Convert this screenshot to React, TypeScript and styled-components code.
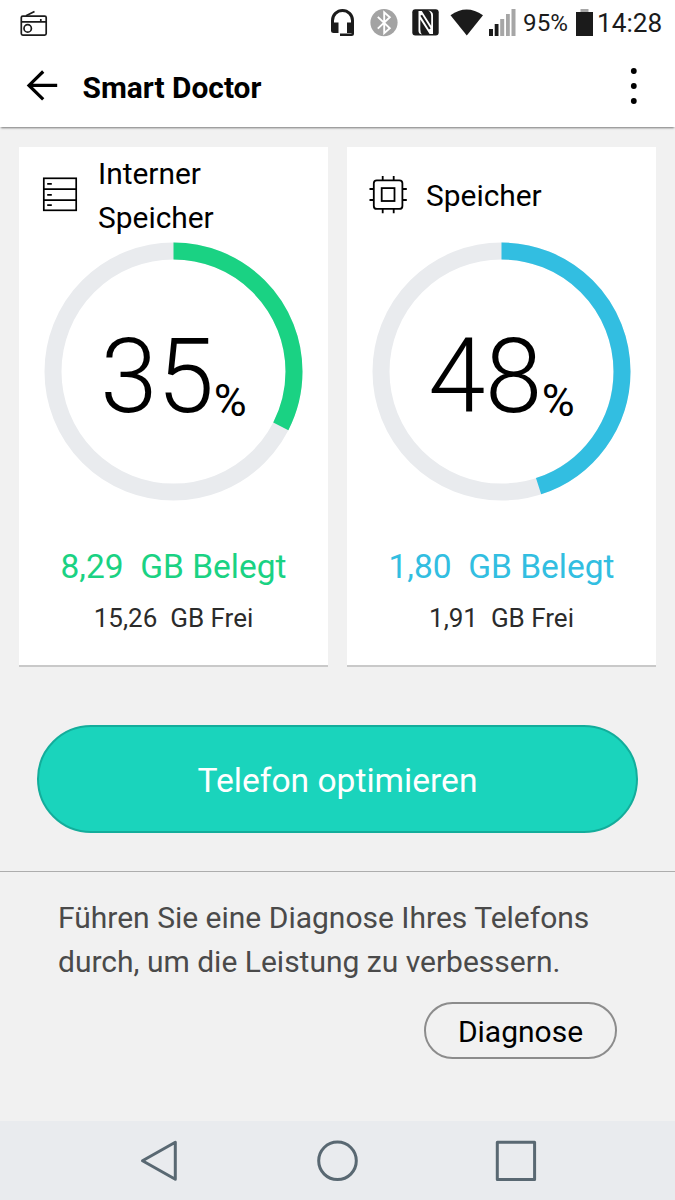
import React from "react";
import styled, { createGlobalStyle } from "styled-components";

const GlobalStyle = createGlobalStyle`
  * { box-sizing: border-box; }
  body { margin: 0; background: #f1f1f1; }
  button { font: inherit; cursor: pointer; }
  svg { display: block; flex: none; }
`;

const Screen = styled.div`
  width: 675px;
  height: 1200px;
  display: flex;
  flex-direction: column;
  overflow: hidden;
  background: #f1f1f1;
  color: #000;
  font-family: Roboto, "Liberation Sans", sans-serif;
`;

const StatusBar = styled.header`
  height: 45px;
  padding: 0 16px 0 20px;
  display: flex;
  align-items: center;
  background: #fff;
  color: #1b1b1b;
`;

const StatusGroup = styled.div`
  margin-left: auto;
  display: flex;
  align-items: center;
`;

const StatusText = styled.span<{ $size: number; $width: number; $align: "left" | "right" }>`
  width: ${(p) => p.$width}px;
  font-size: ${(p) => p.$size}px;
  line-height: 32px;
  white-space: nowrap;
  text-align: ${(p) => p.$align};
`;

const AppBar = styled.div`
  height: 82px;
  padding: 0 37px 0 25px;
  display: flex;
  align-items: center;
  background: #fff;
  box-shadow: 0 2px 2px -1px rgba(0, 0, 0, 0.5);
`;

const Title = styled.h1`
  margin: 3px 0 0 23.5px;
  flex: 1;
  font-size: 29.9px;
  font-weight: 700;
  line-height: 40px;
`;

const IconButton = styled.button`
  padding: 0;
  border: 0;
  background: none;
  color: inherit;
`;

const Cards = styled.section`
  margin: 20px 19px 0;
  display: grid;
  grid-template-columns: 1fr 1fr;
  gap: 19px;
`;

const Card = styled.article`
  height: 520px;
  padding-top: 5px;
  display: flex;
  flex-direction: column;
  align-items: center;
  background: #fff;
  border-bottom: 2px solid #c9c9c9;
`;

const CardHeader = styled.div`
  align-self: stretch;
  height: 88px;
  padding-left: 22px;
  display: flex;
  align-items: center;
  gap: 17px;
`;

const CardTitle = styled.h2`
  margin: 0;
  width: 160px;
  font-size: 29.9px;
  font-weight: 400;
  line-height: 44px;
`;

const Gauge = styled.div`
  margin-top: 2px;
  display: grid;
  place-items: center;
  > * { grid-area: 1 / 1; }
`;

const GaugeValue = styled.div`
  display: flex;
  align-items: baseline;
  margin-top: 11px;
`;

const Digits = styled.span`
  font-size: 103px;
  font-weight: 300;
  line-height: 120px;
  letter-spacing: -0.3px;
`;

const Percent = styled.span`
  position: relative;
  top: 4px;
  font-size: 45px;
  line-height: 50px;
`;

const Used = styled.div<{ $color: string }>`
  margin-top: 44px;
  font-size: 33.5px;
  line-height: 44px;
  white-space: pre;
  color: ${(p) => p.$color};
`;

const Free = styled.div`
  margin-top: 11px;
  font-size: 26px;
  line-height: 36px;
  white-space: pre;
  color: #2b2b2b;
`;

const OptimizeButton = styled.button`
  margin: 58px 37px 38px;
  height: 108px;
  padding: 2px 0 0;
  border: 2px solid #13ad9b;
  border-radius: 54px;
  background: #1ad4bc;
  color: #fff;
  && { font-size: 33.6px; }
`;

const Diagnosis = styled.section`
  flex: 1;
  padding: 24px 58px 0;
  display: flex;
  flex-direction: column;
  border-top: 1px solid #adadad;
`;

const Hint = styled.p`
  margin: 0;
  font-size: 30px;
  line-height: 44px;
  white-space: nowrap;
  color: #4a4a4a;
`;

const DiagnoseButton = styled.button`
  align-self: flex-end;
  margin-top: 18px;
  width: 193px;
  height: 57px;
  padding: 2px 0 0;
  border: 2px solid #8c8c8c;
  border-radius: 29px;
  background: transparent;
  color: #000;
  && { font-size: 30px; }
`;

const NavBar = styled.nav`
  height: 79px;
  padding: 0 138px;
  display: flex;
  align-items: center;
  justify-content: space-between;
  background: #e9ebee;
  color: #596872;
`;

const RadioIcon = () => (
  <svg width="28" height="28" viewBox="0 0 28 28" fill="none" stroke="#1b1b1b" strokeWidth="1.7">
    <rect x="1.3" y="7.1" width="24.9" height="19" rx="1.5" />
    <path d="M1.5 12.8H26M6 6.8 14.5 2.5M20.8 10.1v2.5" />
    <circle cx="7.7" cy="19.4" r="3.7" />
  </svg>
);

const HeadsetIcon = () => (
  <svg width="24" height="28" viewBox="0 0 24 28" fill="#1b1b1b">
    <path d="M0 22V11.5A11.5 11.5 0 0 1 23 11.5V24.5q0 2.5-2.5 2.5H9v-2.6h11.5V24H16V13.5h4v-2a8.5 8.5 0 0 0-17 0v2h4.5V24H2.5Q0 24 0 22Z" />
  </svg>
);

const BluetoothIcon = () => (
  <svg width="28" height="28" viewBox="0 0 28 28">
    <circle cx="14" cy="13.6" r="13.6" fill="#a3a3a3" />
    <path d="m7.8 7.9 12 11.3-5.6 5V3.3l5.6 5-12 11.3" fill="none" stroke="#fff" strokeWidth="1.9" />
  </svg>
);

const NfcIcon = () => (
  <svg width="27" height="27" viewBox="0 0 27 27">
    <rect x=".3" y=".3" width="26.4" height="26.2" rx="3" fill="#1b1b1b" />
    <path d="M10.1 25.5Q6.5 25 6.5 22V2.1h3.3l9.4 14.6V7.2q0-3.8-3-5.7 4.8.5 4.8 4.5v18.9h-3.4L8.3 10.5v9.8q0 4 1.8 5.2Z" fill="#fff" />
    <path d="M9.2 6.3 17.8 20" stroke="#1b1b1b" strokeWidth="2" />
  </svg>
);

const WifiIcon = () => (
  <svg width="34" height="28" viewBox="0 0 34 28">
    <path d="M.5 6.2Q16.5-5 33 6.2L16.8 26.5Z" fill="#1b1b1b" />
  </svg>
);

const SignalIcon = () => (
  <svg width="27" height="27" viewBox="0 0 27 27">
    <path d="M0 20h4v7H0zM5.7 15h3.8v12H5.7z" fill="#1b1b1b" />
    <path d="M11.2 10h4v17h-4zM17 5h3.8v22H17zM22.5 0h4v27h-4z" fill="#a6a6a6" />
  </svg>
);

const BatteryIcon = () => (
  <svg width="17" height="27" viewBox="0 0 17 27">
    <path d="M4.5 0h8v3h-8z" fill="#a6a6a6" />
    <path d="M0 3h17v24H0z" fill="#1b1b1b" />
  </svg>
);

const BackIcon = () => (
  <svg width="34" height="32" viewBox="0 0 34 32" fill="none" stroke="#000" strokeWidth="3.2">
    <path d="M18.2 1.5 4 15.4 18.2 29.3M4 15.4H32.2" />
  </svg>
);

const MenuIcon = () => (
  <svg width="8" height="38" viewBox="0 0 8 38">
    <circle cx="3.8" cy="4" r="2.9" />
    <circle cx="3.8" cy="19" r="2.9" />
    <circle cx="3.8" cy="34" r="2.9" />
  </svg>
);

const StorageIcon = () => (
  <svg width="40" height="40" viewBox="0 0 40 40" fill="none" stroke="#000" strokeWidth="1.7">
    <rect x="2.8" y="2.3" width="32.4" height="32" />
    <path d="M3 13.2H35M3 24.2H35M6.2 7.8h4.6M6.2 18.8h4.6M6.2 29.2h4.6" />
  </svg>
);

const MemoryIcon = () => (
  <svg width="40" height="40" viewBox="0 0 40 40" fill="none" stroke="#000" strokeWidth="1.8">
    <rect x="4.8" y="4.3" width="28.6" height="28.6" rx="3" />
    <rect x="12.7" y="12.1" width="12.8" height="12.9" />
    <path d="M13.7 0v4M24.7 0v4M13.7 33v4.2M24.7 33v4.2M.5 13H5M.5 24H5M33.4 13h4.4M33.4 24h4.4" />
  </svg>
);

const RADIUS = 120.5;
const LENGTH = 2 * Math.PI * RADIUS;

const Ring = ({ color, fill }: { color: string; fill: number }) => (
  <svg width="259" height="259" viewBox="0 0 259 259" fill="none" strokeWidth="17">
    <circle cx="129.5" cy="129.5" r={RADIUS} stroke="#e9ebee" />
    <circle
      cx="129.5"
      cy="129.5"
      r={RADIUS}
      stroke={color}
      strokeDasharray={`${LENGTH * fill} ${LENGTH}`}
      transform="rotate(-90 129.5 129.5)"
    />
  </svg>
);

interface UsageProps {
  icon: React.ReactNode;
  title: string;
  color: string;
  percent: number;
  arc: number;
  used: string;
  free: string;
}

const UsageCard = ({ icon, title, color, percent, arc, used, free }: UsageProps) => (
  <Card>
    <CardHeader>
      {icon}
      <CardTitle>{title}</CardTitle>
    </CardHeader>
    <Gauge>
      <Ring color={color} fill={arc} />
      <GaugeValue>
        <Digits>{percent}</Digits>
        <Percent>%</Percent>
      </GaugeValue>
    </Gauge>
    <Used $color={color}>{`${used}  GB Belegt`}</Used>
    <Free>{`${free}  GB Frei`}</Free>
  </Card>
);

const StatusIcons = styled.div`
  display: flex;
  align-items: center;
  & > :nth-child(1) { margin-right: 15px; }
  & > :nth-child(2) { margin-right: 14px; }
  & > :nth-child(3) { margin-right: 11px; }
  & > :nth-child(4) { margin-right: 5px; }
`;

const Battery = styled.div`
  display: flex;
  align-items: center;
  gap: 8px;
  margin-right: 4px;
`;

export default function App() {
  return (
    <Screen>
      <GlobalStyle />
      <StatusBar>
        <RadioIcon />
        <StatusGroup>
          <StatusIcons>
            <HeadsetIcon />
            <BluetoothIcon />
            <NfcIcon />
            <WifiIcon />
            <SignalIcon />
          </StatusIcons>
          <Battery>
            <StatusText $size={24.2} $width={52} $align="right">95%</StatusText>
            <BatteryIcon />
          </Battery>
          <StatusText $size={26.2} $width={62} $align="left">14:28</StatusText>
        </StatusGroup>
      </StatusBar>
      <AppBar>
        <IconButton aria-label="Zurück"><BackIcon /></IconButton>
        <Title>Smart Doctor</Title>
        <IconButton aria-label="Menü"><MenuIcon /></IconButton>
      </AppBar>
      <Cards>
        <UsageCard icon={<StorageIcon />} title="Interner Speicher" color="#1ad283" percent={35} arc={0.325} used="8,29" free="15,26" />
        <UsageCard icon={<MemoryIcon />} title="Speicher" color="#32bee1" percent={48} arc={0.45} used="1,80" free="1,91" />
      </Cards>
      <OptimizeButton>Telefon optimieren</OptimizeButton>
      <Diagnosis>
        <Hint>
          Führen Sie eine Diagnose Ihres Telefons
          <br />
          durch, um die Leistung zu verbessern.
        </Hint>
        <DiagnoseButton>Diagnose</DiagnoseButton>
      </Diagnosis>
      <NavBar>
        <svg width="44" height="44" viewBox="0 0 44 44" fill="none" stroke="currentColor" strokeWidth="3" strokeLinejoin="round">
          <path d="M4.5 21.7 37.3 3.2V40.2Z" />
        </svg>
        <svg width="44" height="44" viewBox="0 0 44 44" fill="none" stroke="currentColor" strokeWidth="3">
          <circle cx="21.5" cy="21.8" r="18.8" />
        </svg>
        <svg width="44" height="44" viewBox="0 0 44 44" fill="none" stroke="currentColor" strokeWidth="3" strokeLinejoin="round">
          <rect x="4.3" y="3.2" width="37.3" height="37.3" />
        </svg>
      </NavBar>
    </Screen>
  );
}
